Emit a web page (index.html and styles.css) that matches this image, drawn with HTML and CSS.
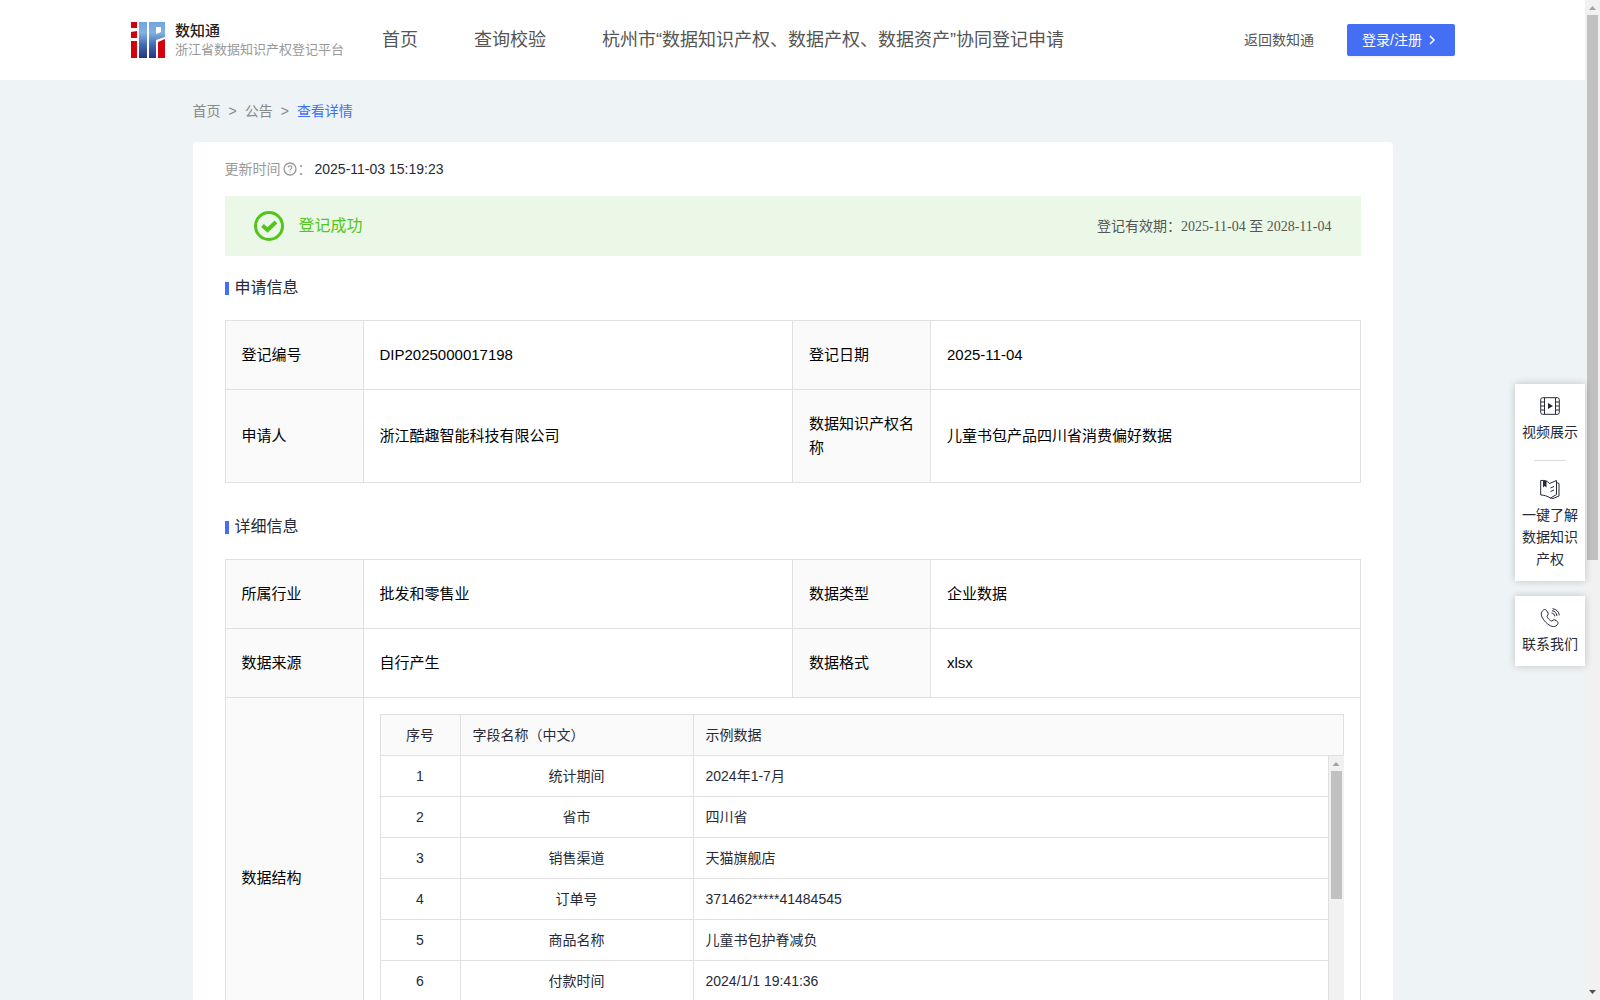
FILE: index.html
```html
<!DOCTYPE html>
<html lang="zh-CN">
<head>
<meta charset="utf-8">
<meta name="viewport" content="width=device-width, initial-scale=1">
<title>数知通 - 查看详情</title>
<link rel="stylesheet" href="styles.css">
</head>
<body>
<div class="page">
  <header class="header">
    <a class="brand" href="#">
      <svg class="brand-mark" viewBox="0 0 34 36" aria-hidden="true">
        <defs><linearGradient id="blue" x1="0" y1="0" x2="0" y2="1"><stop offset="0" stop-color="#6fa5dd"/><stop offset=".3" stop-color="#82b0e2"/><stop offset=".65" stop-color="#3f68b0"/><stop offset="1" stop-color="#25347f"/></linearGradient></defs>
        <path fill="#d2030d" d="M0 0h6v6H0zM0 10l6-1v7H0zM0 19h6v17H0zM27 20l7-3v19h-7z"/>
        <path fill="url(#blue)" fill-rule="evenodd" d="M8 0h8v36H8zM18 0h16v15l-9 3v18h-7zM25 5v7l5-2V5z"/>
      </svg>
      <span class="brand-text">
        <span class="brand-name">数知通</span>
        <span class="brand-sub">浙江省数据知识产权登记平台</span>
      </span>
    </a>
    <nav class="nav">
      <a href="#">首页</a>
      <a href="#">查询校验</a>
      <a href="#">杭州市“数据知识产权、数据产权、数据资产”协同登记申请</a>
    </nav>
    <a class="back" href="#">返回数知通</a>
    <button class="login" type="button">登录/注册
      <svg viewBox="0 0 12 12" aria-hidden="true"><path d="M4 2l4 4-4 4" fill="none" stroke="currentColor" stroke-width="1.5"/></svg>
    </button>
  </header>

  <main class="main">
    <nav class="crumbs" aria-label="面包屑">
      <a href="#">首页</a><span>&gt;</span><a href="#">公告</a><span>&gt;</span><a class="current" href="#">查看详情</a>
    </nav>

    <div class="card">
      <div class="updated">
        <span class="updated-label">更新时间</span>
        <svg class="help" viewBox="0 0 14 14" fill="none" stroke="currentColor" aria-hidden="true"><circle cx="7" cy="7" r="6" stroke-width="1.3"/><path d="M5.1 5.6C5.1 3.2 8.9 3.3 8.9 5.6 8.9 6.9 7 6.9 7 8.4M7 9.4v1.2" stroke-width="1.1"/></svg>
        <span class="updated-label">：</span>
        <time>2025-11-03 15:19:23</time>
      </div>

      <div class="banner">
        <svg viewBox="0 0 30 30" fill="none" stroke="currentColor" aria-hidden="true"><circle cx="15" cy="15" r="13.5" stroke-width="3"/><path d="M8.500 14.500l5 4.500 8.500-8" stroke-width="4"/></svg>
        <strong>登记成功</strong>
        <span class="valid">登记有效期：<span class="dates">2025-11-04 至 2028-11-04</span></span>
      </div>

      <section>
        <h2>申请信息</h2>
        <table class="info">
          <colgroup><col class="label"><col><col class="label"><col></colgroup>
          <tr><th scope="row">登记编号</th><td>DIP2025000017198</td><th scope="row">登记日期</th><td>2025-11-04</td></tr>
          <tr><th scope="row">申请人</th><td>浙江酷趣智能科技有限公司</td><th scope="row">数据知识产权名称</th><td>儿童书包产品四川省消费偏好数据</td></tr>
        </table>
      </section>

      <section class="details">
        <h2>详细信息</h2>
        <table class="info">
          <colgroup><col class="label"><col><col class="label"><col></colgroup>
          <tr><th scope="row">所属行业</th><td>批发和零售业</td><th scope="row">数据类型</th><td>企业数据</td></tr>
          <tr><th scope="row">数据来源</th><td>自行产生</td><th scope="row">数据格式</th><td>xlsx</td></tr>
          <tr>
            <th scope="row">数据结构</th>
            <td class="nested" colspan="3">
              <table class="fields head">
                <colgroup><col class="no"><col class="name"><col></colgroup>
                <tr><th class="mid" scope="col">序号</th><th scope="col">字段名称（中文）</th><th scope="col">示例数据</th></tr>
              </table>
              <div class="viewport">
                <table class="fields">
                  <colgroup><col class="no"><col class="name"><col></colgroup>
                  <tr><td>1</td><td>统计期间</td><td>2024年1-7月</td></tr>
                  <tr><td>2</td><td>省市</td><td>四川省</td></tr>
                  <tr><td>3</td><td>销售渠道</td><td>天猫旗舰店</td></tr>
                  <tr><td>4</td><td>订单号</td><td>371462*****41484545</td></tr>
                  <tr><td>5</td><td>商品名称</td><td>儿童书包护脊减负</td></tr>
                  <tr><td>6</td><td>付款时间</td><td>2024/1/1 19:41:36</td></tr>
                </table>
                <div class="scrollbar"><i class="up"></i><i class="thumb"></i><i class="down"></i></div>
              </div>
            </td>
          </tr>
        </table>
      </section>
    </div>
  </main>
</div>

<aside class="float">
  <div class="float-card">
    <a href="#">
      <svg viewBox="0 0 20 20" fill="none" stroke="currentColor" aria-hidden="true"><rect x=".7" y="1.7" width="18.6" height="16.6" rx="2"/><path d="M4.5 2v16M15.5 2v16M1 6h3.5M1 10h3.5M1 14h3.5M15.5 6H19M15.5 10H19M15.5 14H19"/><path d="M8 7l5 3-5 3z" fill="currentColor" stroke="none"/></svg>
      视频展示
    </a>
    <hr>
    <a href="#">
      <svg viewBox="0 0 20 20" fill="none" stroke="currentColor" aria-hidden="true"><path d="M.7 1.500C4 1 7.500 2 9.500 4.500l7-3v14l-6 3.500C7 17 4 16 .7 16zM16.500 3.500l2.500 1V17l-6 2.500-2.500-.5M10.500 9L14 7.500M10.500 12.500L14 11"/><path d="M3 1.500h3.500V8.500L4.700 7 3 8.500z" fill="currentColor" stroke="none"/></svg>
      一键了解数据知识产权
    </a>
  </div>
  <div class="float-card">
    <a href="#">
      <svg viewBox="0 0 20 20" fill="none" stroke="currentColor" aria-hidden="true"><path d="M3.500 2C5 .8 6.500 2 7.500 4s1 2.500-.5 4c-.5 1 3.500 5.500 5 5 1.500-1.500 2.500-1.500 4-.5 2.500 1.500 2.500 3 1 4.500-2.500 3-7 1.500-11-2.500S-1 5 3.500 2z"/><path d="M11.500 5c2 .3 3 1.500 3.300 3.300M12 2.700c3 .4 4.600 2.300 5 5.300M12.500.7C16.500 1.200 18.800 3.600 19.300 7.300"/></svg>
      联系我们
    </a>
  </div>
</aside>

<div class="scrollbar page-bar"><i class="up"></i><i class="thumb"></i><i class="down"></i></div>
</body>
</html>
```
FILE: styles.css
```css
* { box-sizing: border-box; }

body {
  display: flex;
  position: relative;
  height: 100vh;
  margin: 0;
  overflow: hidden;
  background: #eef3f6;
  color: #272a36;
  font: 14px/22px "Liberation Sans", "Noto Sans CJK SC", sans-serif;
}

a { color: inherit; text-decoration: none; }

.page { flex: 1; min-width: 0; }

/* Header */
.header {
  display: flex;
  align-items: center;
  height: 80px;
  padding: 0 130px;
  background: #fff;
  color: #555;
  white-space: nowrap;
}
.brand { display: flex; align-items: center; gap: 10px; padding-left: 1px; }
.brand-mark { width: 34px; height: 36px; }
.brand-text { display: flex; flex-direction: column; }
.brand-name { color: #222; font-size: 15px; font-weight: 500; line-height: 20px; }
.brand-sub { color: #999; font-size: 13px; line-height: 18px; }
.nav { display: flex; flex: 1; gap: 56px; margin-left: 38px; font-size: 18px; }
.login {
  display: flex;
  align-items: center;
  gap: 4px;
  height: 32px;
  margin-left: 33px;
  padding: 0 17px 0 15px;
  border: 0;
  border-radius: 2px;
  background: #446ff5;
  box-shadow: 0 2px 0 rgba(0, 0, 0, .04);
  color: #fff;
  font: inherit;
}
.login svg { width: 12px; height: 12px; }

/* Content */
.main { max-width: 1200px; margin: 0 auto; }
.crumbs { display: flex; gap: 8px; padding: 20px 0; color: #888; line-height: 22px; }
.crumbs .current { color: #426ff6; }
.card { padding: 16px 32px; border-radius: 4px; background: #fff; }

.updated { display: flex; align-items: center; margin-bottom: 16px; }
.updated-label, .help { color: #999; }
.help { width: 14px; height: 14px; margin: 0 1px 0 2px; }
.updated time { margin-left: 3px; }

.banner {
  display: flex;
  align-items: center;
  gap: 15px;
  height: 60px;
  padding: 0 29px;
  background: #ebf8e7;
  color: #52c41a;
}
.banner svg { width: 30px; height: 30px; }
.banner strong { flex: 1; font-size: 16px; font-weight: 400; }
.valid { color: #555; }
.dates { font-family: "Liberation Serif", "Noto Sans CJK SC", serif; }

h2 {
  display: flex;
  align-items: center;
  gap: 6px;
  height: 64px;
  margin: 0;
  font-size: 16px;
  font-weight: 400;
}
h2::before { content: ""; width: 4px; height: 13px; background: #426ff6; }
.details { margin-top: 12px; }

/* Tables */
table {
  width: 100%;
  table-layout: fixed;
  border-spacing: 0;
  border: solid #e0e0e0;
  border-width: 1px 0 0 1px;
}
th, td {
  border: solid #e0e0e0;
  border-width: 0 1px 1px 0;
  font-weight: 400;
  text-align: left;
}
th { background: #fafafa; }

.info { color: #000; font-size: 15px; line-height: 24px; }
.info .label { width: 138px; }
.info th, .info td { padding: 22px 16px; }
.info .nested { padding: 16px; }

.fields { color: #272a36; font-size: 14px; line-height: 22px; }
.fields .no { width: 80px; }
.fields .name { width: 233px; }
.info .fields th, .info .fields td { padding: 9px 12px; }
.fields td, .fields .mid { text-align: center; }
.fields td:last-child { text-align: left; }
.viewport { display: flex; height: 286px; overflow: hidden; }
.viewport .fields { flex: 1; align-self: flex-start; border-top: 0; }

/* Scrollbars */
.scrollbar {
  display: flex;
  flex: none;
  flex-direction: column;
  align-items: center;
  width: 15px;
  background: #f1f1f1;
}
.scrollbar i { display: block; }
.scrollbar .thumb { width: 11px; height: 128px; background: #c1c1c1; }
.scrollbar .up, .scrollbar .down { width: 7px; height: 4px; }
.scrollbar .up {
  margin: 6px 0 5px;
  background: #a3a3a3;
  clip-path: polygon(50% 0, 100% 100%, 0 100%);
}
.scrollbar .down {
  margin: auto 0 6px;
  background: #505050;
  clip-path: polygon(0 0, 100% 0, 50% 100%);
}
.page-bar .thumb { flex: 0 0 545px; }

/* Shortcuts pinned to the window's right edge */
.float {
  position: absolute;
  top: 384px;
  right: 15px;
  display: flex;
  flex-direction: column;
  gap: 15px;
  width: 70px;
}
.float-card {
  padding: 12px 6px 11px;
  background: #fff;
  box-shadow: 0 0 8px rgba(0, 0, 0, .2);
  text-align: center;
}
.float a { display: block; }
.float svg { display: block; width: 20px; height: 20px; margin: 0 auto 5px; }
.float hr { width: 32px; margin: 17px auto 18px; border: 0; border-top: 1px solid #ddd; }
```
